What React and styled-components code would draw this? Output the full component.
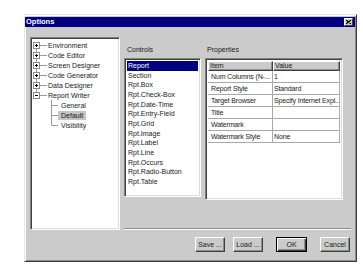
import styled, { createGlobalStyle } from "styled-components";

const GlobalStyle = createGlobalStyle`
html, body {
  margin:0;
  padding:0;
  background:#fff;
}
body {
  font-family:"Liberation Sans", Arial, sans-serif;
  font-size:7px;
  color:#1a1a1a;
}
`;

const Page = styled.div`
padding:14px 0 0 24px;
`;

const Dialog = styled.div`
box-sizing:border-box;
width:333px;
height:248px;
background:#cbcbcb;
border:1px solid;
border-color:#e6e6e6 #3c3c3c #3c3c3c #e6e6e6;
box-shadow:inset 1px 1px 0 #fff, inset -1px -1px 0 #8c8c8c;
padding:2px 1px 1px 0;
display:flex;
flex-direction:column;
`;

const TitleBar = styled.div`
height:10px;
background:#000080;
display:flex;
align-items:center;
justify-content:space-between;
padding:0 2px 0 1px;
`;

const Title = styled.span`
color:#fff;
font-weight:bold;
font-size:7.5px;
line-height:10px;
`;

const CloseButton = styled.div`
box-sizing:border-box;
width:9px;
height:8px;
background:#cbcbcb;
border:1px solid;
border-color:#fff #404040 #404040 #fff;
display:flex;
align-items:center;
justify-content:center;
`;

const Body = styled.div`
display:flex;
gap:4px;
padding:10px 0 0 5px;
`;

const Sunken = styled.div`
box-sizing:border-box;
background:#fff;
border:1px solid;
border-color:#808080 #fff #fff #808080;
box-shadow:inset 1px 1px 0 #404040, inset -1px -1px 0 #dcdcdc;
`;

const Tree = styled(Sunken)`
width:90px;
height:193px;
padding:2px 0 0 1px;
`;

const TreeRow = styled.div`
display:flex;
align-items:center;
height:10px;
padding-left:${p => p.$indent || 0}px;
`;

const NodeLabel = styled.span`
line-height:9px;
padding:0 3px 0 ${p => p.$pad || 1}px;
white-space:nowrap;
background:${p => (p.$selected ? "#c4c4c4" : "transparent")};
`;

const RightSide = styled.div`
width:227px;
display:flex;
flex-direction:column;
`;

const Panels = styled.div`
display:flex;
gap:4px;
padding-top:8px;
`;

const Column = styled.div`
width:${p => p.$w}px;
display:flex;
flex-direction:column;
`;

const GroupLabel = styled.div`
height:13px;
line-height:10px;
padding-left:${p => p.$pad || 3}px;
`;

const ListBox = styled(Sunken)`
height:139px;
padding:2px 2px 0 2px;
`;

const ListItem = styled.div`
height:9.67px;
line-height:9px;
padding-left:1px;
white-space:nowrap;
background:${p => (p.$selected ? "#000080" : "transparent")};
color:${p => (p.$selected ? "#fff" : "inherit")};
`;

const Grid = styled(Sunken)`
height:142px;
padding:2px 2px 0 2px;
`;

const GridRow = styled.div`
display:grid;
grid-template-columns:65px 1fr;
height:${p => (p.$head ? 10 : 12)}px;
`;

const HeadCell = styled.div`
box-sizing:border-box;
background:#cbcbcb;
border:1px solid;
border-color:#fff #404040 #404040 #fff;
box-shadow:inset -1px -1px 0 #8c8c8c;
line-height:8px;
padding-left:1px;
`;

const Cell = styled.div`
box-sizing:border-box;
border-right:1px solid #a8a8a8;
border-bottom:1px solid #a8a8a8;
line-height:11px;
padding-left:${p => p.$pad || 3}px;
letter-spacing:-0.15px;
white-space:nowrap;
overflow:hidden;
`;

const Separator = styled.div`
margin-top:28px;
border-top:1px solid #8c8c8c;
border-bottom:1px solid #fff;
`;

const Buttons = styled.div`
display:flex;
justify-content:flex-end;
margin-top:7px;
padding-right:1px;
`;

const Button = styled.div`
box-sizing:border-box;
width:${p => p.$w || 30}px;
height:15px;
margin-left:${p => p.$gap || 0}px;
background:#cbcbcb;
border:1px solid;
border-color:${p => (p.$default ? "#000" : "#fff #404040 #404040 #fff")};
box-shadow:${p =>
  p.$default
    ? "inset 1px 1px 0 #fff, inset -1px -1px 0 #404040, inset -2px -2px 0 #8c8c8c"
    : "inset -1px -1px 0 #8c8c8c"};
display:flex;
align-items:center;
justify-content:center;
line-height:13px;
`;

const Expander = ({ open, first, last }) => (
  <svg width="15" height="10" viewBox="0 0 15 10">
    {!first && <line x1="4.5" y1="0" x2="4.5" y2="2" stroke="#9a9a9a" />}
    {!last && <line x1="4.5" y1="8" x2="4.5" y2="10" stroke="#9a9a9a" />}
    <line x1="8" y1="5.5" x2="15" y2="5.5" stroke="#9a9a9a" />
    <rect x="1.5" y="2.5" width="6" height="6" fill="#fff" stroke="#8a8a8a" />
    <line x1="3" y1="5.5" x2="6" y2="5.5" stroke="#000" />
    {!open && <line x1="4.5" y1="4" x2="4.5" y2="7" stroke="#000" />}
  </svg>
);

const Elbow = ({ last }) => (
  <svg width="7" height="10" viewBox="0 0 7 10">
    <line x1="0.5" y1="0" x2="0.5" y2={last ? 5.5 : 10} stroke="#9a9a9a" />
    <line x1="0.5" y1="5.5" x2="7" y2="5.5" stroke="#9a9a9a" />
  </svg>
);

const topNodes = [
  "Environment",
  "Code Editor",
  "Screen Designer",
  "Code Generator",
  "Data Designer",
  "Report Writer",
];

const children = ["General", "Default", "Visibility"];

const controls = [
  "Report",
  "Section",
  "Rpt.Box",
  "Rpt.Check-Box",
  "Rpt.Date-Time",
  "Rpt.Entry-Field",
  "Rpt.Grid",
  "Rpt.Image",
  "Rpt.Label",
  "Rpt.Line",
  "Rpt.Occurs",
  "Rpt.Radio-Button",
  "Rpt.Table",
];

const properties = [
  ["Num Columns (N-...", "1"],
  ["Report Style", "Standard"],
  ["Target Browser", "Specify Internet Expl..."],
  ["Title", ""],
  ["Watermark", ""],
  ["Watermark Style", "None"],
];

const App = () => {
  return (
    <>
      <GlobalStyle />
      <Page>
        <Dialog>
          <TitleBar>
            <Title>Options</Title>
            <CloseButton>
              <svg width="5" height="4" viewBox="0 0 5 4">
                <path d="M0 0L5 4M5 0L0 4" stroke="#000" strokeWidth="1.2" />
              </svg>
            </CloseButton>
          </TitleBar>
          <Body>
            <Tree>
              {topNodes.map((n, i) => (
                <TreeRow key={n}>
                  <Expander
                    open={i === topNodes.length - 1}
                    first={i === 0}
                    last={i === topNodes.length - 1}
                  />
                  <NodeLabel>{n}</NodeLabel>
                </TreeRow>
              ))}
              {children.map((c, i) => (
                <TreeRow key={c} $indent={19}>
                  <Elbow last={i === children.length - 1} />
                  <NodeLabel $pad={3} $selected={c === "Default"}>
                    {c}
                  </NodeLabel>
                </TreeRow>
              ))}
            </Tree>
            <RightSide>
              <Panels>
                <Column $w={77}>
                  <GroupLabel>Controls</GroupLabel>
                  <ListBox>
                    {controls.map((c, i) => (
                      <ListItem key={c} $selected={i === 0}>
                        {c}
                      </ListItem>
                    ))}
                  </ListBox>
                </Column>
                <Column $w={138}>
                  <GroupLabel $pad={2}>Properties</GroupLabel>
                  <Grid>
                    <GridRow $head>
                      <HeadCell>Item</HeadCell>
                      <HeadCell>Value</HeadCell>
                    </GridRow>
                    {properties.map(([k, v]) => (
                      <GridRow key={k}>
                        <Cell>{k}</Cell>
                        <Cell $pad={1}>{v}</Cell>
                      </GridRow>
                    ))}
                  </Grid>
                </Column>
              </Panels>
              <Separator />
              <Buttons>
                <Button>Save ...</Button>
                <Button $gap={8}>Load ...</Button>
                <Button $gap={13} $w={31} $default>
                  OK
                </Button>
                <Button $gap={13}>Cancel</Button>
              </Buttons>
            </RightSide>
          </Body>
        </Dialog>
      </Page>
    </>
  );
};

export default App;
